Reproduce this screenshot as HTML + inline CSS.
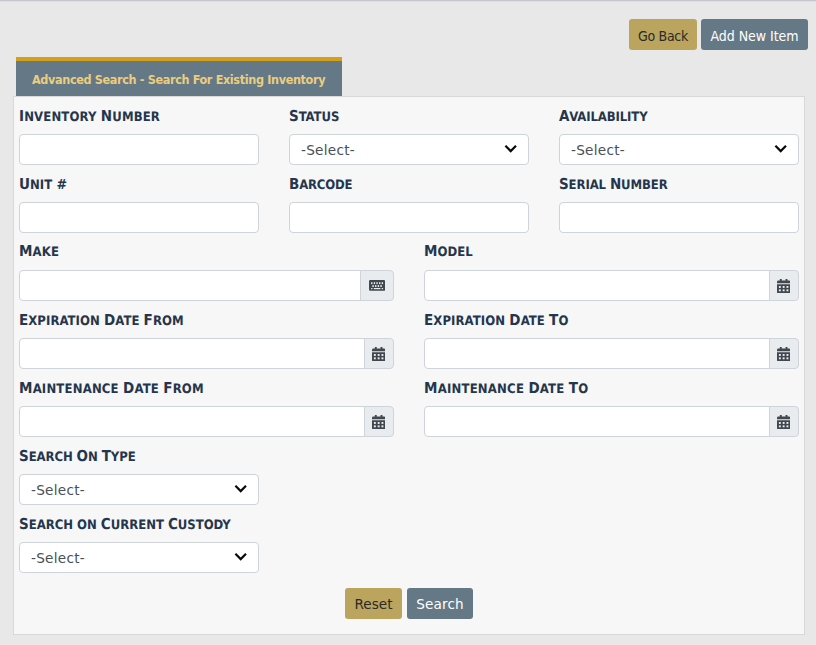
<!DOCTYPE html>
<html lang="en">
<head>
<meta charset="utf-8">
<title>Advanced Search - Search For Existing Inventory</title>
<style>
*{box-sizing:border-box;margin:0;padding:0}
html,body{width:816px;height:645px;overflow:hidden}
body{background:#e8e8e8;position:relative;font-family:"DejaVu Sans Condensed","DejaVu Sans","Liberation Sans",sans-serif;}
.topline{position:absolute;left:0;top:0;width:816px;height:2px;background:linear-gradient(#c6c6d0 0,#c6c6d0 50%,#dedee2 50%,#dedee2 100%)}
.btn{position:absolute;height:31px;border-radius:3px;font-size:14px;line-height:31px;padding-top:1.5px;text-align:center;white-space:nowrap}
.vd{font-family:"DejaVu Sans","Liberation Sans",sans-serif;font-size:13.6px;padding-top:0.5px}
.gold{background:#bba45d;color:#2a2a2a}
.slate{background:#657886;color:#fff}
.tab{position:absolute;left:16px;top:57px;width:326px;height:40px;background:#657886;border-top:4px solid #d4a019;color:#ebcd80;font-weight:bold;font-size:12.5px;line-height:37px;padding-left:16px;white-space:nowrap;letter-spacing:-0.35px}
.panel{position:absolute;left:13px;top:96px;width:792px;height:539px;background:#f7f7f7;border:1px solid #d8d8d8}
.lbl{position:absolute;text-rendering:geometricPrecision;font-weight:bold;color:#25364c;font-size:13px;line-height:20px;white-space:nowrap;}
.lbl b{font-size:15px;font-weight:bold}
.inp{position:absolute;height:31px;background:#fff;border:1px solid #ced4da;border-radius:4px}
.grp{position:absolute;height:31px}
.grp .inp{left:0;top:0;border-radius:4px 0 0 4px}
.grp .add{position:absolute;top:0;right:0;height:31px;background:#e9ecef;border:1px solid #ced4da;border-left:1px solid #ced4da;border-radius:0 4px 4px 0}
.sel{position:absolute;height:31px;width:240px;background:#fff;border:1px solid #ced4da;border-radius:4px;font-family:"DejaVu Sans","Liberation Sans",sans-serif;font-size:13.6px;letter-spacing:0.28px;line-height:30px;color:#495057;padding-left:11px}
.sel svg{position:absolute;right:11.1px;top:9px}
.add svg{position:absolute}
</style>
</head>
<body>
<div class="topline"></div>
<div class="btn gold" style="left:629px;top:19px;width:68px;letter-spacing:-0.32px">Go Back</div>
<div class="btn slate" style="left:701px;top:19px;width:107px;letter-spacing:-0.03px">Add New Item</div>
<div class="tab" style="top:57px;letter-spacing:-0.35px">Advanced Search - Search For Existing Inventory</div>
<div class="panel"></div>

<div class="lbl" style="left:19px;top:106px;letter-spacing:0.14px"><b>I</b>NVENTORY <b>N</b>UMBER</div>
<div class="lbl" style="left:289px;top:106px;letter-spacing:-0.04px"><b>S</b>TATUS</div>
<div class="lbl" style="left:559px;top:106px;letter-spacing:-0.13px"><b>A</b>VAILABILITY</div>
<div class="inp" style="left:19px;top:134px;width:240px"></div>
<div class="sel" style="left:289px;top:134px">-Select-<svg width="14" height="10" viewBox="0 0 14 10"><path d="M2.4 1.8 L7.7 7.1 L13 1.8" fill="none" stroke="#0a0a0a" stroke-width="2.2" stroke-linecap="butt" stroke-linejoin="miter"/></svg></div>
<div class="sel" style="left:559px;top:134px">-Select-<svg width="14" height="10" viewBox="0 0 14 10"><path d="M2.4 1.8 L7.7 7.1 L13 1.8" fill="none" stroke="#0a0a0a" stroke-width="2.2" stroke-linecap="butt" stroke-linejoin="miter"/></svg></div>

<div class="lbl" style="left:19px;top:174px;letter-spacing:0.05px"><b>U</b>NIT <b style="font-size:14px">#</b></div>
<div class="lbl" style="left:289px;top:174px;letter-spacing:-0.16px"><b>B</b>ARCODE</div>
<div class="lbl" style="left:559px;top:174px;letter-spacing:-0.11px"><b>S</b>ERIAL <b>N</b>UMBER</div>
<div class="inp" style="left:19px;top:202px;width:240px"></div>
<div class="inp" style="left:289px;top:202px;width:240px"></div>
<div class="inp" style="left:559px;top:202px;width:240px"></div>

<div class="lbl" style="left:19px;top:241px;letter-spacing:0.16px"><b>M</b>AKE</div>
<div class="lbl" style="left:424px;top:241px;letter-spacing:0.01px"><b>M</b>ODEL</div>
<div class="grp" style="left:19px;top:270px;width:375px"><div class="inp" style="width:342px"></div><div class="add" style="width:34px"><svg style="left:8.1px;top:8.9px" width="16.2" height="10.8" viewBox="0 0 16.2 10.8"><rect x="0" y="0" width="16.2" height="10.8" rx="1.3" fill="#40474e"/><g fill="#e9ecef"><rect x="2.1" y="2.2" width="1.35" height="1.9"/><rect x="4.75" y="2.2" width="1.35" height="1.9"/><rect x="7.4" y="2.2" width="1.35" height="1.9"/><rect x="10.05" y="2.2" width="1.35" height="1.9"/><rect x="12.7" y="2.2" width="1.35" height="1.9"/><rect x="3.4" y="5.1" width="1.4" height="1.9"/><rect x="6.05" y="5.1" width="1.4" height="1.9"/><rect x="8.7" y="5.1" width="1.4" height="1.9"/><rect x="11.35" y="5.1" width="1.4" height="1.9"/><rect x="2.1" y="8" width="1.35" height="1.2"/><rect x="4.75" y="8" width="6.65" height="1.2"/><rect x="12.7" y="8" width="1.35" height="1.2"/></g></svg></div></div>
<div class="grp" style="left:424px;top:270px;width:375px"><div class="inp" style="width:346px"></div><div class="add" style="width:30px"><svg class="cal" style="left:7.1px;top:7.6px" width="13.3" height="14.4" preserveAspectRatio="none" viewBox="0 0 14 15"><path d="M0 5.5h14v8a1.5 1.5 0 0 1-1.500 1.500h-11a1.500 1.500 0 0 1-1.500-1.500zM0 4.500v-1.500a1.500 1.500 0 0 1 1.500-1.500h1.500v-1.500h2v1.500h4v-1.500h2v1.500h1.500a1.500 1.500 0 0 1 1.500 1.500v1.500z" fill="#40474e"/><g fill="#e9ecef"><rect x="2" y="7.300" width="2" height="2"/><rect x="6" y="7.300" width="2" height="2"/><rect x="10" y="7.300" width="2" height="2"/><rect x="2" y="10.800" width="2" height="2"/><rect x="6" y="10.800" width="2" height="2"/><rect x="10" y="10.800" width="2" height="2"/></g></svg></div></div>

<div class="lbl" style="left:19px;top:310px;letter-spacing:0.06px"><b>E</b>XPIRATION <b>D</b>ATE <b>F</b>ROM</div>
<div class="lbl" style="left:424px;top:310px;letter-spacing:0.09px"><b>E</b>XPIRATION <b>D</b>ATE <b>T</b>O</div>
<div class="grp" style="left:19px;top:338px;width:375px"><div class="inp" style="width:346px"></div><div class="add" style="width:30px"><svg class="cal" style="left:7.1px;top:7.6px" width="13.3" height="14.4" preserveAspectRatio="none" viewBox="0 0 14 15"><path d="M0 5.5h14v8a1.5 1.5 0 0 1-1.500 1.500h-11a1.500 1.500 0 0 1-1.500-1.500zM0 4.500v-1.500a1.500 1.500 0 0 1 1.500-1.500h1.500v-1.500h2v1.500h4v-1.500h2v1.500h1.500a1.500 1.500 0 0 1 1.500 1.500v1.500z" fill="#40474e"/><g fill="#e9ecef"><rect x="2" y="7.300" width="2" height="2"/><rect x="6" y="7.300" width="2" height="2"/><rect x="10" y="7.300" width="2" height="2"/><rect x="2" y="10.800" width="2" height="2"/><rect x="6" y="10.800" width="2" height="2"/><rect x="10" y="10.800" width="2" height="2"/></g></svg></div></div>
<div class="grp" style="left:424px;top:338px;width:375px"><div class="inp" style="width:346px"></div><div class="add" style="width:30px"><svg class="cal" style="left:7.1px;top:7.6px" width="13.3" height="14.4" preserveAspectRatio="none" viewBox="0 0 14 15"><path d="M0 5.5h14v8a1.5 1.5 0 0 1-1.500 1.500h-11a1.500 1.500 0 0 1-1.500-1.500zM0 4.500v-1.500a1.500 1.500 0 0 1 1.500-1.500h1.500v-1.500h2v1.500h4v-1.500h2v1.500h1.500a1.500 1.500 0 0 1 1.500 1.500v1.500z" fill="#40474e"/><g fill="#e9ecef"><rect x="2" y="7.300" width="2" height="2"/><rect x="6" y="7.300" width="2" height="2"/><rect x="10" y="7.300" width="2" height="2"/><rect x="2" y="10.800" width="2" height="2"/><rect x="6" y="10.800" width="2" height="2"/><rect x="10" y="10.800" width="2" height="2"/></g></svg></div></div>
<div class="lbl" style="left:19px;top:378px;letter-spacing:0.18px"><b>M</b>AINTENANCE <b>D</b>ATE <b>F</b>ROM</div>
<div class="lbl" style="left:424px;top:378px;letter-spacing:0.21px"><b>M</b>AINTENANCE <b>D</b>ATE <b>T</b>O</div>
<div class="grp" style="left:19px;top:406px;width:375px"><div class="inp" style="width:346px"></div><div class="add" style="width:30px"><svg class="cal" style="left:7.1px;top:7.6px" width="13.3" height="14.4" preserveAspectRatio="none" viewBox="0 0 14 15"><path d="M0 5.5h14v8a1.5 1.5 0 0 1-1.500 1.500h-11a1.500 1.500 0 0 1-1.500-1.500zM0 4.500v-1.500a1.500 1.500 0 0 1 1.500-1.500h1.500v-1.500h2v1.500h4v-1.500h2v1.500h1.500a1.500 1.500 0 0 1 1.500 1.500v1.500z" fill="#40474e"/><g fill="#e9ecef"><rect x="2" y="7.300" width="2" height="2"/><rect x="6" y="7.300" width="2" height="2"/><rect x="10" y="7.300" width="2" height="2"/><rect x="2" y="10.800" width="2" height="2"/><rect x="6" y="10.800" width="2" height="2"/><rect x="10" y="10.800" width="2" height="2"/></g></svg></div></div>
<div class="grp" style="left:424px;top:406px;width:375px"><div class="inp" style="width:346px"></div><div class="add" style="width:30px"><svg class="cal" style="left:7.1px;top:7.6px" width="13.3" height="14.4" preserveAspectRatio="none" viewBox="0 0 14 15"><path d="M0 5.5h14v8a1.5 1.5 0 0 1-1.500 1.500h-11a1.500 1.500 0 0 1-1.500-1.500zM0 4.500v-1.500a1.500 1.500 0 0 1 1.500-1.500h1.500v-1.500h2v1.500h4v-1.500h2v1.500h1.500a1.500 1.500 0 0 1 1.500 1.500v1.500z" fill="#40474e"/><g fill="#e9ecef"><rect x="2" y="7.300" width="2" height="2"/><rect x="6" y="7.300" width="2" height="2"/><rect x="10" y="7.300" width="2" height="2"/><rect x="2" y="10.800" width="2" height="2"/><rect x="6" y="10.800" width="2" height="2"/><rect x="10" y="10.800" width="2" height="2"/></g></svg></div></div>
<div class="lbl" style="left:19px;top:446px;letter-spacing:-0.09px"><b>S</b>EARCH <b>O</b>N <b>T</b>YPE</div>
<div class="sel" style="left:19px;top:474px">-Select-<svg width="14" height="10" viewBox="0 0 14 10"><path d="M2.4 1.8 L7.7 7.1 L13 1.8" fill="none" stroke="#0a0a0a" stroke-width="2.2" stroke-linecap="butt" stroke-linejoin="miter"/></svg></div>
<div class="lbl" style="left:19px;top:514px;letter-spacing:-0.02px"><b>S</b>EARCH ON <b>C</b>URRENT <b>C</b>USTODY</div>
<div class="sel" style="left:19px;top:542px">-Select-<svg width="14" height="10" viewBox="0 0 14 10"><path d="M2.4 1.8 L7.7 7.1 L13 1.8" fill="none" stroke="#0a0a0a" stroke-width="2.2" stroke-linecap="butt" stroke-linejoin="miter"/></svg></div>
<div class="btn gold vd" style="left:345px;top:588px;width:57px;letter-spacing:0.04px">Reset</div>
<div class="btn slate vd" style="left:407px;top:588px;width:66px;letter-spacing:0.13px">Search</div>
</body>
</html>
